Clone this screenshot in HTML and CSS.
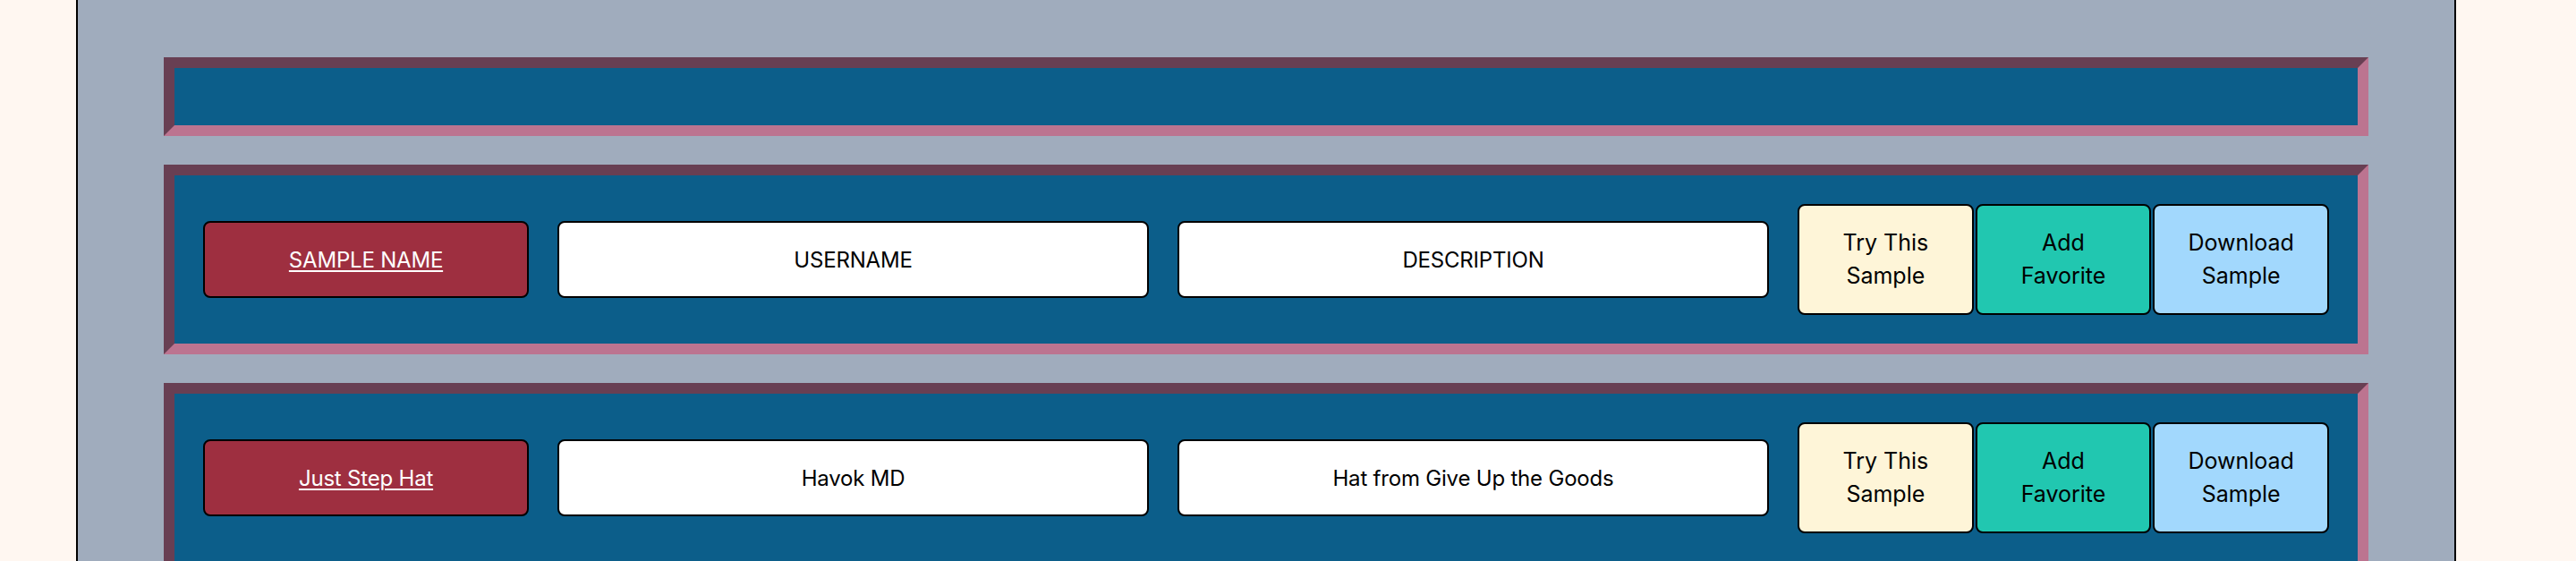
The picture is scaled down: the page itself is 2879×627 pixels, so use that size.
FILE: index.html
```html
<!DOCTYPE html>
<html lang="en">
<head>
<meta charset="utf-8">
<title>Samples</title>
<link rel="stylesheet" href="styles.css">
</head>
<body>
  <main class="page">
    <section class="panel panel-empty"></section>

    <section class="panel">
      <div class="row">
        <div class="cell cell-name"><a href="#" class="name-link">SAMPLE NAME</a></div>
        <div class="cell cell-text">USERNAME</div>
        <div class="cell cell-text">DESCRIPTION</div>
        <div class="actions">
          <button class="action action-try">Try This<br>Sample</button>
          <button class="action action-fav">Add<br>Favorite</button>
          <button class="action action-dl">Download<br>Sample</button>
        </div>
      </div>
    </section>

    <section class="panel">
      <div class="row">
        <div class="cell cell-name"><a href="#" class="name-link">Just Step Hat</a></div>
        <div class="cell cell-text">Havok MD</div>
        <div class="cell cell-text">Hat from Give Up the Goods</div>
        <div class="actions">
          <button class="action action-try">Try This<br>Sample</button>
          <button class="action action-fav">Add<br>Favorite</button>
          <button class="action action-dl">Download<br>Sample</button>
        </div>
      </div>
    </section>
  </main>
</body>
</html>
```

FILE: styles.css
```css
html, body {
  margin: 0;
  padding: 0;
  background: #fff7f1;
  overflow: hidden;
}

body {
  font-family: "Inter", "Liberation Sans", sans-serif;
}

.page {
  margin-left: 85px;
  width: 2656px;
  min-height: 700px;
  box-sizing: content-box;
  background: #a0acbd;
  border-left: 2px solid #000;
  border-right: 2px solid #000;
  padding: 64px 0 0;
  display: flex;
  flex-direction: column;
  gap: 32px;
}

.panel {
  margin: 0 96px;
  background: #0c5e8a;
  border: 12px solid;
  border-color: #683f53 #bc7490 #bc7490 #683f53;
}

.panel-empty {
  height: 64px;
}

.row {
  display: grid;
  grid-template-columns: 364px 1fr 1fr 594px;
  gap: 32px;
  align-items: center;
  padding: 32px;
}

.cell {
  height: 86px;
  box-sizing: border-box;
  border: 2px solid #000;
  border-radius: 8px;
  display: flex;
  align-items: center;
  justify-content: center;
  font-size: 24px;
  letter-spacing: -0.2px;
  color: #000;
}

.cell-name {
  background: #9e2f40;
}

.name-link {
  color: #fff;
  text-decoration: underline;
  text-underline-offset: 3px;
  text-decoration-thickness: 2px;
}

.cell-text {
  background: #fff;
}

.actions {
  display: flex;
  gap: 2px;
}

.action {
  flex: 1;
  height: 124px;
  box-sizing: border-box;
  border: 2px solid #000;
  border-radius: 8px;
  font-family: "Inter", "Liberation Sans", sans-serif;
  font-size: 25px;
  font-weight: 400;
  line-height: 37px;
  color: #000;
  padding: 0;
}

.action-try {
  background: #fef5d8;
}

.action-fav {
  background: #21c7b0;
}

.action-dl {
  background: #a2d8fd;
}
```
